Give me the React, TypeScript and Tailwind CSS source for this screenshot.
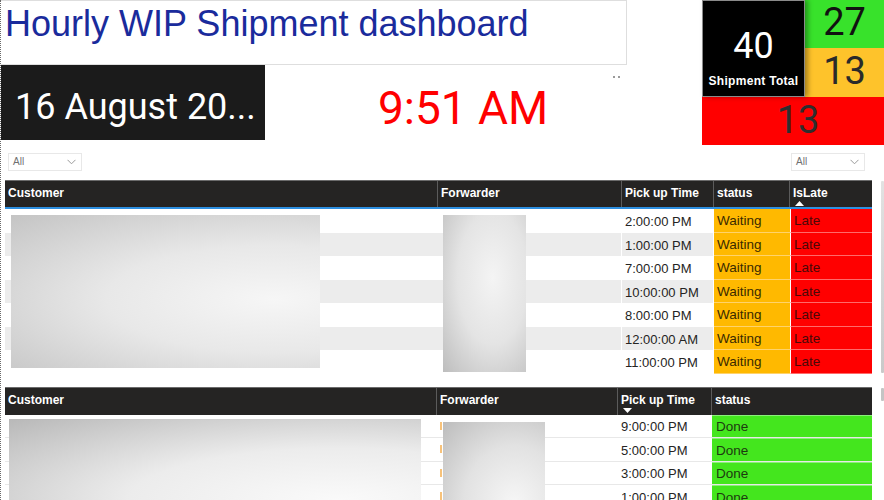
import React from "react";

const t1 = [
  { time: "2:00:00 PM", alt: false },
  { time: "1:00:00 PM", alt: true },
  { time: "7:00:00 PM", alt: false },
  { time: "10:00:00 PM", alt: true },
  { time: "8:00:00 PM", alt: false },
  { time: "12:00:00 AM", alt: true },
  { time: "11:00:00 PM", alt: false },
];

const t2 = ["9:00:00 PM", "5:00:00 PM", "3:00:00 PM", "1:00:00 PM"];

function Slicer() {
  return (
    <div className="w-[74px] h-[18px] border border-[#e8e8e8] bg-white flex items-center justify-between px-[4px]">
      <span className="text-[10px] text-[#707070] leading-none">All</span>
      <svg width="9" height="6" viewBox="0 0 9 6" className="mr-[1px]">
        <path d="M0.5 0.8 L4.5 4.8 L8.5 0.8" fill="none" stroke="#9a9a9a" strokeWidth="1" />
      </svg>
    </div>
  );
}

function HeaderCell({ w, label, arrow, last }: { w: string; label: string; arrow?: "up" | "down"; last?: boolean }) {
  return (
    <div className={`${w} h-full relative px-[3px] pt-[4px] ${last ? "" : "border-r border-[#5b5b5b]"}`}>
      <span className="text-[12px] font-bold text-white leading-[16px] block">{label}</span>
      {arrow === "up" && (
        <svg width="9" height="5" viewBox="0 0 9 5" className="absolute left-[5px] top-[20px]">
          <path d="M0 5 L4.5 0 L9 5 Z" fill="#ffffff" />
        </svg>
      )}
      {arrow === "down" && (
        <svg width="9" height="5" viewBox="0 0 9 5" className="absolute left-[5px] top-[20px]">
          <path d="M0 0 L4.5 5 L9 0 Z" fill="#ffffff" />
        </svg>
      )}
    </div>
  );
}

export default function App() {
  return (
    <div
      className="w-[884px] h-[500px] overflow-hidden bg-white relative border-l border-dotted border-[#6a6a6a]"
      style={{ fontFamily: '"Liberation Sans", Arial, sans-serif' }}
    >
      {/* Top section */}
      <div className="flex h-[145px]">
        <div className="w-[701px] flex flex-col">
          <div className="h-[65px] w-[626px] border-t border-r border-b border-[#dedede] pl-[4px] pt-[5px]">
            <div className="text-[36px] leading-none text-[#1a2b9c]">Hourly WIP Shipment dashboard</div>
          </div>
          <div className="flex h-[75px]">
            <div
              className="w-[264px] h-full bg-[#1b1b1b] text-white text-[36px] flex items-center pl-[14px] pt-[8px]"
              style={{ fontFamily: "Roboto, sans-serif" }}
            >
              16 August 20...
            </div>
            <div className="flex-1 relative">
              <div
                className="pl-[113px] pt-[6px] text-[46px] text-[#ff0000] leading-[75px]"
                style={{ fontFamily: "Roboto, sans-serif" }}
              >
                9:51 AM
              </div>
              <div className="absolute left-[348px] top-[11px] flex gap-[3px]">
                <div className="w-[2px] h-[2px] bg-[#9a9a9a]" />
                <div className="w-[2px] h-[2px] bg-[#9a9a9a]" />
              </div>
            </div>
          </div>
        </div>
        <div className="w-[182px] flex flex-col" style={{ fontFamily: "Roboto, sans-serif" }}>
          <div className="flex h-[97px]">
            <div className="w-[103px] h-full bg-black border border-[#8a8a8a] flex flex-col items-center shadow-[3px_0_5px_rgba(0,0,0,0.35)] z-10">
              <div className="text-white text-[36px] leading-none mt-[27px]">40</div>
              <div
                className="text-white text-[12px] font-bold mt-[8px] tracking-[0.3px]"
                style={{ fontFamily: '"Liberation Sans", Arial, sans-serif' }}
              >
                Shipment Total
              </div>
            </div>
            <div className="flex-1 flex flex-col">
              <div className="h-[48px] bg-[#38e22b] flex items-center justify-center text-[38px] text-[#111] leading-none pb-[4px]">
                27
              </div>
              <div className="h-[49px] bg-[#fec32b] flex items-center justify-center text-[38px] text-[#2a2a2a] leading-none pb-[4px]">
                13
              </div>
            </div>
          </div>
          <div className="h-[48px] bg-[#ff0000] flex items-center justify-center text-[38px] text-[#2e2e2e] leading-none pl-[10px] pb-[2px]">
            13
          </div>
        </div>
      </div>

      {/* Slicers */}
      <div className="flex justify-between mt-[8px] pl-[7px] pr-[19px]">
        <Slicer />
        <Slicer />
      </div>

      {/* Table 1 */}
      <div className="flex mt-[9px] pl-[4px]">
        <div className="w-[867px]">
          <div className="h-[29px] bg-[#252423] border-t border-[#6b6b6b] border-b-2 border-b-[#2d8fe0] flex">
            <HeaderCell w="w-[433px]" label="Customer" />
            <HeaderCell w="w-[184px]" label="Forwarder" />
            <HeaderCell w="w-[92px]" label="Pick up Time" />
            <HeaderCell w="w-[76px]" label="status" />
            <HeaderCell w="w-[82px]" label="IsLate" arrow="up" last />
          </div>
          <div className="relative">
            {t1.map((r, i) => (
              <div key={i} className={`h-[23.5px] flex ${r.alt ? "bg-[#ececec]" : "bg-white"}`}>
                <div className="w-[433px] h-full" />
                <div className="w-[184px] h-full border-r border-white" />
                <div className="w-[92px] h-full border-r border-white flex items-center pl-[3px] pt-[2px] text-[13px] text-[#252423]">
                  {r.time}
                </div>
                <div className="w-[76px] h-full bg-[#ffb900] border-b border-[#ffd36b] flex items-center pl-[3px] pt-[2px] text-[13.5px] text-[#3a2a00]">
                  Waiting
                </div>
                <div className="w-[82px] h-full bg-[#ff0000] border-b border-[#ff6a6a] border-l border-l-white flex items-center pl-[3px] pt-[2px] text-[13.5px] text-[#4a0808]">
                  Late
                </div>
              </div>
            ))}
            <div className="absolute left-[6px] top-[6px] w-[309px] h-[153px] bg-[radial-gradient(ellipse_at_85%_55%,#f6f6f6_0%,#e8e8e8_45%,#c4c4c4_100%)]" />
            <div className="absolute left-[438px] top-[6px] w-[83px] h-[157px] bg-[radial-gradient(ellipse_at_60%_40%,#f4f4f4_0%,#e4e4e4_50%,#bdbdbd_100%)]" />
          </div>
        </div>
        <div className="ml-[9px] mt-[1px] w-[4px] h-[192px] rounded-[1px] bg-gradient-to-b from-[#e2e2e2] to-[#c9c9c9]" />
      </div>

      {/* Table 2 */}
      <div className="flex mt-[13px] pl-[4px]">
        <div className="w-[867px]">
          <div className="h-[28px] bg-[#252423] border-t border-[#6b6b6b] flex">
            <HeaderCell w="w-[432px]" label="Customer" />
            <HeaderCell w="w-[181px]" label="Forwarder" />
            <HeaderCell w="w-[94px]" label="Pick up Time" arrow="down" />
            <HeaderCell w="w-[160px]" label="status" last />
          </div>
          <div className="relative">
            {t2.map((t, i) => (
              <div key={i} className="h-[23.5px] flex border-b border-[#e8e8e8] bg-white">
                <div className="w-[432px] h-full" />
                <div className="w-[181px] h-full flex items-center pl-[3px]">
                  <div className="w-[2px] h-[8px] bg-[#f7c27a]" />
                </div>
                <div className="w-[94px] h-full flex items-center pl-[3px] pt-[2px] text-[13px] text-[#252423]">{t}</div>
                <div className="w-[160px] h-full bg-[#44e61e] border-t border-[#8af07a] flex items-center pl-[4px] pt-[2px] text-[13.5px] text-[#1d3a10]">
                  Done
                </div>
              </div>
            ))}
            <div className="absolute left-[4px] top-[4px] w-[412px] h-[90px] bg-[radial-gradient(ellipse_at_80%_90%,#fafafa_0%,#ececec_45%,#b8b8b8_100%)]" />
            <div className="absolute left-[438px] top-[7px] w-[102px] h-[90px] bg-[radial-gradient(ellipse_at_70%_90%,#f6f6f6_0%,#e2e2e2_50%,#bcbcbc_100%)]" />
          </div>
        </div>
        <div className="ml-[9px] mt-[1px] w-[4px] h-[13px] rounded-[1px] bg-[#c4c4c4]" />
      </div>
    </div>
  );
}
